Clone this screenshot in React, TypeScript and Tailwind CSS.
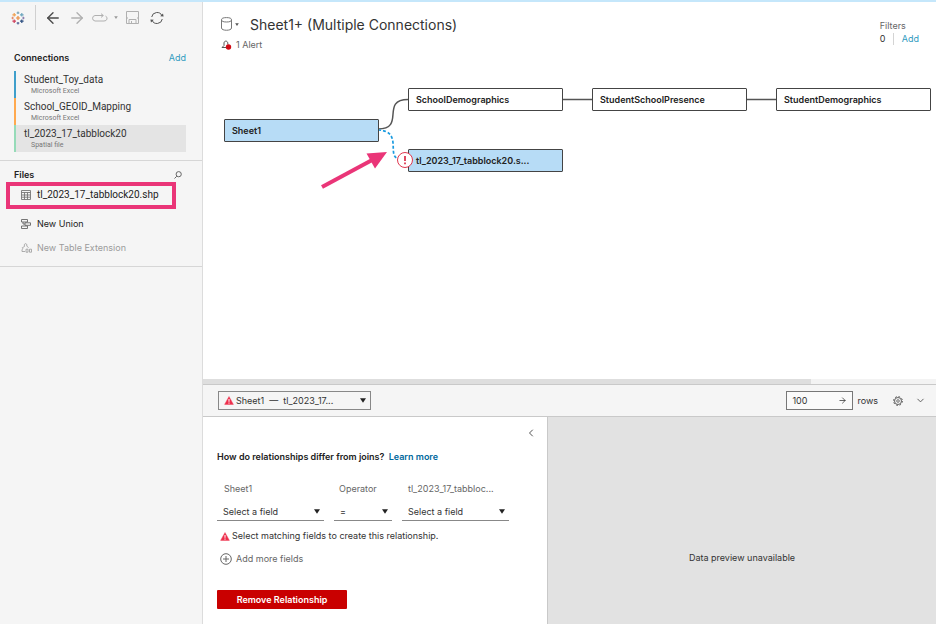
import React from "react";
import { ArrowLeft, ArrowRight, ChevronDown, ChevronLeft } from "lucide-react";

function TableauMark() {
  const plus = (x: number, y: number, r: number, c: string) => (
    <path key={`${x}-${y}`} d={`M${x - r} ${y}H${x + r}M${x} ${y - r}V${y + r}`} stroke={c} strokeWidth="1.2" />
  );
  return (
    <svg width="14" height="14" viewBox="0 0 14 14" fill="none" aria-hidden="true">
      {plus(7, 7, 2, "#eb8a3c")}
      {plus(3.2, 3.8, 1.8, "#f0a050")}
      {plus(10.8, 3.8, 1.8, "#6ba5bd")}
      {plus(3.2, 10.2, 1.8, "#d0405c")}
      {plus(10.8, 10.2, 1.8, "#2d4f80")}
      {plus(7, 1.8, 1.3, "#7ba6b8")}
      {plus(7, 12.2, 1.3, "#5a6a9c")}
      {plus(1.6, 7, 1.2, "#e58a6a")}
      {plus(12.4, 7, 1.2, "#8d7fb0")}
    </svg>
  );
}

function Warning() {
  return (
    <svg className="shrink-0" width="10" height="9" viewBox="0 0 10 9" aria-hidden="true">
      <path d="M5 .5 9.4 8.4H.6Z" fill="#ee2f4c" stroke="#ee2f4c" strokeWidth=".4" strokeLinejoin="round" />
      <path d="M5 3v2.800M5 6.500v1.200" stroke="#fff" strokeWidth="1" />
    </svg>
  );
}

function Caret({ className = "" }: { className?: string }) {
  return (
    <svg className={className} width="6" height="5" viewBox="0 0 6 5" aria-hidden="true">
      <path d="M0 .3H6L3 4.8Z" fill="currentColor" />
    </svg>
  );
}

function Gear() {
  return (
    <svg width="10" height="10" viewBox="0 0 10 10" fill="none" stroke="currentColor" aria-hidden="true">
      <circle cx="5" cy="5" r="3.500" strokeWidth=".9" />
      <circle cx="5" cy="5" r="1.300" strokeWidth=".8" />
      <circle cx="5" cy="5" r="4.400" strokeWidth="1" strokeDasharray="1.700 1.756" />
    </svg>
  );
}

const connections = [
  { name: "Student_Toy_data", kind: "Microsoft Excel", style: "border-[#3f9fcb]" },
  { name: "School_GEOID_Mapping", kind: "Microsoft Excel", style: "border-[#ffa94f]" },
  { name: "tl_2023_17_tabblock20", kind: "Spatial file", style: "border-[#96dbb8] bg-[#e4e4e4]" },
];

function Sidebar() {
  return (
    <aside className="w-[203px] shrink-0 border-r border-[#dcdcdc] bg-[#f5f5f5]">
      <div className="flex h-[31px] items-center pl-[11px] text-[#b0b0b0]">
        <TableauMark />
        <span className="ml-[10px] h-[25px] w-px bg-[#d0d0d0]" />
        <button aria-label="Back" className="ml-[8px] text-[#4a4a4a]"><ArrowLeft size={18} strokeWidth={1.8} /></button>
        <button aria-label="Forward" className="ml-[6px]"><ArrowRight size={18} strokeWidth={1.8} /></button>
        <button aria-label="Replay" className="ml-[5px]">
          <svg width="17" height="10" viewBox="0 0 17 10" fill="none" stroke="currentColor">
            <path d="M12 2.5H4a3 2.8 0 0 0 0 5.5H13a3 2.6 0 0 0 1.5-4.9M10 .7l2.4 1.8L10 4.4" />
          </svg>
        </button>
        <button aria-label="Replay options" className="ml-[6px] text-[#999]"><Caret className="h-[3px] w-[4px]" /></button>
        <button aria-label="Save" className="ml-[8px]">
          <svg width="13" height="13" viewBox="0 0 13 13" fill="none" stroke="currentColor">
            <path d="M.5 .5H12.5V12.5H.5ZM3 12V8.5H10V12M5.5 10v2M1 7h1M11 7h1" />
          </svg>
        </button>
        <button aria-label="Refresh" className="ml-[11px] text-[#555]">
          <svg width="14" height="14" viewBox="0 0 14 14" fill="none" stroke="currentColor" strokeWidth="1">
            <path d="M1.700 6A5.400 5.400 0 0 1 12 4.800M12.300 8A5.400 5.400 0 0 1 2 9.200" />
            <path d="M10.200 5.200 13.600 5.600 13 2.600ZM3.800 8.800.4 8.400 1 11.400Z" fill="currentColor" stroke="none" />
          </svg>
        </button>
      </div>
      <section className="border-b border-[#d6d6d6] pt-[17px] pr-[16px] pb-[8px] pl-[14px]">
        <div className="flex h-4 items-center justify-between">
          <h2 className="text-[9px] font-semibold text-[#222]">Connections</h2>
          <button className="text-[9px] text-[#2f9bbf]">Add</button>
        </div>
        <ul className="mt-[5px] font-['Roboto',sans-serif]">
          {connections.map((c) => (
            <li key={c.name} className={`h-[27px] border-l-2 pt-[3px] pl-2 ${c.style}`}>
              <div className="text-[10px] leading-[12px] text-[#333]">{c.name}</div>
              <div className="pl-[7px] text-[7px] leading-[10px] text-[#777]">{c.kind}</div>
            </li>
          ))}
        </ul>
      </section>
      <section className="border-b border-[#d6d6d6] pt-[6px] pb-[6px]">
        <div className="flex h-4 items-center justify-between pr-[20px] pl-[14px]">
          <h2 className="text-[9px] font-semibold text-[#222]">Files</h2>
          <button aria-label="Search files">
            <svg width="8" height="8" viewBox="0 0 8 8" fill="none" stroke="#666">
              <circle cx="4.7" cy="3.2" r="2.6" /><path d="M2.8 5.2.5 7.5" />
            </svg>
          </button>
        </div>
        <button className="relative -mt-px ml-[6px] flex h-[27px] w-[170px] items-center gap-[6px] pb-[2px] pl-[15px] font-['Roboto',sans-serif] text-[10px] text-[#222]">
          <svg width="10" height="10" viewBox="0 0 10 10" fill="none" stroke="#777" strokeWidth=".9">
            <path d="M.5 .5h9v9h-9ZM.5 2.5h9M.5 5h9M.5 7.2h9M3.5 2.5v7M6.5 2.5v7" />
          </svg>
          tl_2023_17_tabblock20.shp
          <span className="absolute inset-0 border-4 border-[#ea3578]" />
        </button>
        <button className="mt-[3px] flex h-[24px] items-center gap-[6px] pl-[21px] text-[9px] text-[#222]">
          <svg width="10" height="10" viewBox="0 0 10 10" fill="none" stroke="#666" strokeWidth=".9">
            <path d="M.5 .5h6v2.500h-6ZM4 3.800h5.500v2.500h-5.500ZM.5 7h6v2.500h-6ZM2 3v2h2" />
          </svg>
          New Union
        </button>
        <button className="flex h-[24px] items-center gap-[5px] pl-[21px] text-[9px] text-[#9b9b9b]">
          <svg width="11" height="10" viewBox="0 0 11 10" fill="none" stroke="currentColor" strokeWidth=".8">
            <path d="M1 8.500V6.500L2 5.600 1.300 4.700 3.400 3.600V1.400L4.600.6 5.800 1.400V3.200L7.600 4.600M1 8.500H4M5 6.200v3h2v-3ZM8.500 6.200v3h2v-3Z" />
          </svg>
          New Table Extension
        </button>
      </section>
    </aside>
  );
}

const nodes = [
  { label: "Sheet1", place: "left-[21px] top-[59px]", fill: "bg-[#b7dcf6]" },
  { label: "SchoolDemographics", place: "left-[205px] top-[28px]", fill: "bg-white" },
  { label: "StudentSchoolPresence", place: "left-[389px] top-[28px]", fill: "bg-white" },
  { label: "StudentDemographics", place: "left-[573px] top-[28px]", fill: "bg-white" },
  { label: "tl_2023_17_tabblock20.s...", place: "left-[205px] top-[89px]", fill: "bg-[#b7dcf6]" },
];

function Canvas() {
  return (
    <div className="relative flex-1 overflow-hidden">
      <svg className="absolute top-0 left-0" width="733" height="180" viewBox="0 0 733 180" fill="none" aria-hidden="true">
        <path d="M175 69C203 69 177 39.500 205 39.500M359 39.500H389M543 39.500H573" stroke="#555" strokeWidth="1.500" />
        <path d="M175 70C201 71 182 98 197 99" stroke="#1a9be0" strokeWidth="1.700" strokeDasharray="3 2" />
      </svg>
      {nodes.map((n) => (
        <button key={n.label} className={`absolute flex h-[23px] w-[155px] items-center rounded-[1px] border border-[#444] pl-[7px] text-[9px] font-semibold text-[#222] ${n.place} ${n.fill}`}>
          {n.label}
        </button>
      ))}
      <svg className="absolute top-0 left-0" width="230" height="180" viewBox="0 0 230 180" fill="none" aria-hidden="true">
        <circle cx="202" cy="100" r="7.5" fill="#fff" stroke="#e0364f" />
        <path d="M202 96v5M202 102.5v1.8" stroke="#d81f3c" strokeWidth="1.6" />
        <path d="M119 127 171 99" stroke="#ea3578" strokeWidth="4" />
        <path d="M184 92 163.500 93.500 172 108.500Z" fill="#ea3578" />
      </svg>
    </div>
  );
}

function FieldSelect({ label, value, width, inset }: { label: string; value: string; width: string; inset: string }) {
  return (
    <label className={`block text-[9px] text-[#666] ${width}`}>
      <span className={`block leading-4 ${inset}`}>{label}</span>
      <span className="mt-[6px] grid h-[18px] items-center border-b border-[#888]">
        <select className="col-start-1 row-start-1 h-4 w-full appearance-none bg-transparent pl-[6px] text-[9px] text-[#333]">
          <option>{value}</option>
        </select>
        <Caret className="pointer-events-none col-start-1 row-start-1 mr-[4px] justify-self-end text-[#222]" />
      </span>
    </label>
  );
}

export default function App() {
  return (
    <div className="flex min-h-screen flex-col border-t-2 border-[#c5e7fb] bg-white font-['Inter',sans-serif] text-[#333]">
      <div className="flex flex-1">
        <Sidebar />
        <main className="flex min-w-0 flex-1 flex-col">
          <header className="flex h-[58px] shrink-0 items-start justify-between pt-[12px] pr-[17px] pl-[18px]">
            <div>
              <div className="flex h-5 items-center">
                <svg width="11" height="14" viewBox="0 0 11 14" fill="none" stroke="#777" aria-hidden="true">
                  <ellipse cx="5.500" cy="2.800" rx="5" ry="2.200" /><path d="M.5 2.800V11c0 3 10 3 10 0V2.800" />
                </svg>
                <Caret className="ml-[3px] h-[3px] w-[4px] text-[#555]" />
                <h1 className="ml-[11px] text-[14px]">Sheet1+ (Multiple Connections)</h1>
              </div>
              <button className="mt-[3px] flex h-4 items-center gap-[4px] text-[9px] text-[#666]">
                <svg width="11" height="10" viewBox="0 0 11 10" fill="none" aria-hidden="true">
                  <path d="M5.500 7.500H1L3 5.500V3C3.200.5 6.500.5 6.800 3V4.500" stroke="#555" />
                  <circle cx="7.500" cy="7" r="2.700" fill="#d00a14" />
                </svg>
                1 Alert
              </button>
            </div>
            <div className="mt-[5px] text-[9px] leading-[13px] text-[#666]">
              <div>Filters</div>
              <div className="flex items-center">
                <span className="w-[13px] text-[#333]">0</span>
                <button className="border-l border-[#d4d4d4] pl-2 leading-[12px] text-[#2f9bbf]">Add</button>
              </div>
            </div>
          </header>
          <Canvas />
          <div className="h-[5px] shrink-0 bg-[#f3f3f3]"><div className="h-full w-[83%] bg-[#dedede]" /></div>
          <div className="flex h-[33px] shrink-0 items-center border-y border-[#c9c9c9] bg-[#f5f5f5] pr-[10px] pl-[15px] text-[9px]">
            <label className="flex h-[19px] w-[153px] items-center border border-[#888] pl-[5px]">
              <Warning />
              <span className="grid min-w-0 flex-1 items-center">
                <select aria-label="Relationship" className="col-start-1 row-start-1 h-4 w-full appearance-none bg-transparent pl-[2px]">
                  <option>Sheet1 {"\u00a0"}—{"\u00a0"} tl_2023_17...</option>
                </select>
                <Caret className="pointer-events-none col-start-1 row-start-1 mr-[4px] justify-self-end text-[#222]" />
              </span>
            </label>
            <label className="ml-auto flex items-center gap-[4px]">
              <span className="flex h-[19px] w-[67px] items-center border border-[#777] bg-[#fafafa] px-[5px]">
                <input className="min-w-0 flex-1 bg-transparent outline-none" defaultValue="100" />
                <ArrowRight size={9} />
              </span>
              rows
            </label>
            <button aria-label="Settings" className="ml-[15px] text-[#555]"><Gear /></button>
            <button aria-label="Collapse preview" className="ml-[12px] text-[#555]"><ChevronDown size={11} /></button>
          </div>
          <div className="flex min-h-[207px] shrink-0">
            <section className="w-[345px] shrink-0 border-r border-[#c9c9c9] pr-[10px] pl-[14px]">
              <div className="flex h-8 items-center justify-end"><button aria-label="Hide relationship editor" className="text-[#555]"><ChevronLeft size={12} /></button></div>
              <p className="text-[9px] leading-4 font-semibold text-[#222]">How do relationships differ from joins? <a href="#learn" className="ml-[2px] text-[#00689d]">Learn more</a></p>
              <div className="mt-4 flex gap-[10px]">
                <FieldSelect label="Sheet1" value="Select a field" width="w-[107px]" inset="pl-[7px]" />
                <FieldSelect label="Operator" value="=" width="w-[58px]" inset="pl-[5px]" />
                <FieldSelect label="tl_2023_17_tabbloc..." value="Select a field" width="w-[107px]" inset="pl-[6px]" />
              </div>
              <p className="mt-[7px] flex h-4 items-center gap-[2px] pl-[3px] text-[9px]"><Warning />Select matching fields to create this relationship.</p>
              <button className="mt-[7px] flex h-4 items-center gap-[4px] pl-[3px] text-[9px] text-[#666]">
                <svg width="12" height="12" viewBox="0 0 12 12" fill="none" stroke="currentColor"><circle cx="6" cy="6" r="5.300" /><path d="M6 3v6M3 6h6" /></svg>
                Add more fields
              </button>
              <button className="mt-[23px] block h-[19px] w-[130px] rounded-[1px] bg-[#c90000] text-[9px] font-semibold text-white">Remove Relationship</button>
            </section>
            <section className="flex flex-1 items-center justify-center bg-[#e2e2e2] pt-[74px] text-[9px]">Data preview unavailable</section>
          </div>
        </main>
      </div>
    </div>
  );
}
